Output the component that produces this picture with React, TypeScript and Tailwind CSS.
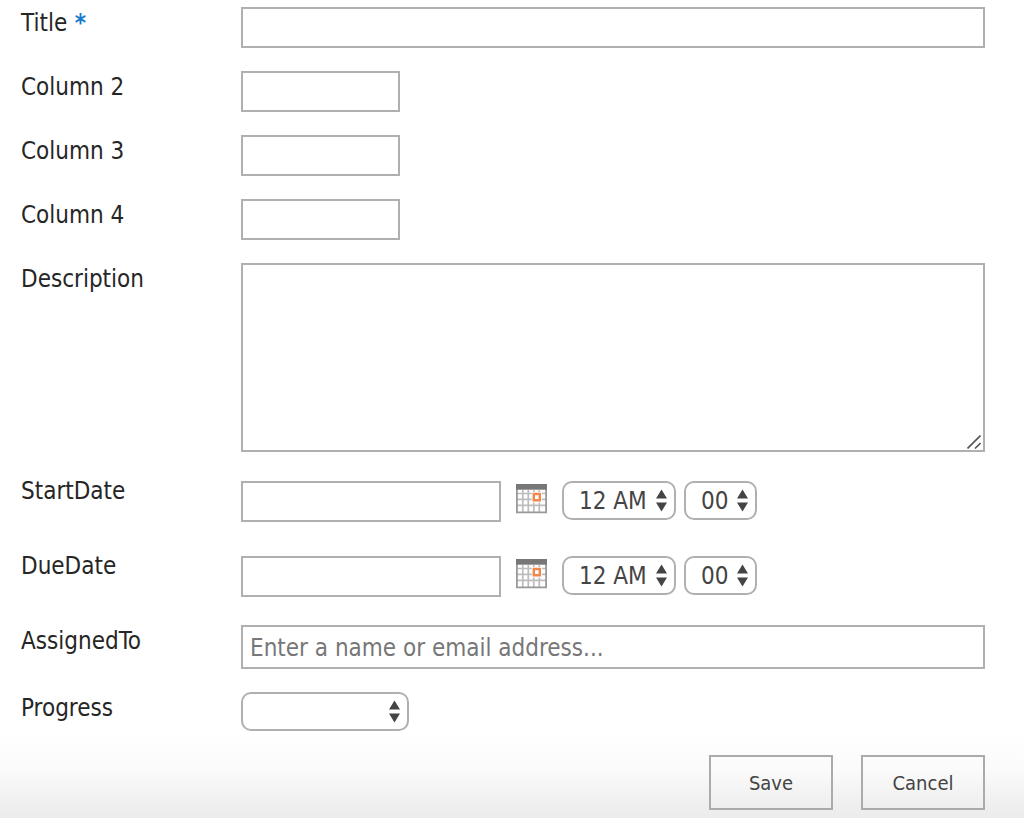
import type { ReactNode } from 'react';

const field = 'block border-2 border-[#b0b0b0] bg-white text-2xl text-[#444] outline-none focus:border-[#0072c6]';
const label = 'text-2xl leading-8 text-[#262626]';
const action = 'h-[55px] w-[124px] border-2 border-[#ababab] bg-transparent text-xl text-[#444]';

function Row({ id, title, required, children }: { id: string; title: string; required?: boolean; children: ReactNode }) {
  return (
    <div className="flex">
      <label htmlFor={id} className={`w-[220px] shrink-0 self-start ${label}`}>
        {title}
        {required && <span className="font-bold text-[#1a7acb]"> *</span>}
      </label>
      <div className="min-w-0 flex-1">{children}</div>
    </div>
  );
}

function Picker({ id, name, options, width }: { id: string; name?: string; options: string[]; width: string }) {
  return (
    <div className={`relative ${width}`}>
      <select
        id={id}
        aria-label={name}
        className="block h-[39px] w-full appearance-none rounded-[10px] border-2 border-[#b0b0b0] bg-white pl-[15px] text-2xl leading-8 text-[#444] outline-none focus:border-[#0072c6]"
      >
        {options.map((option) => (
          <option key={option}>{option}</option>
        ))}
      </select>
      <svg className="pointer-events-none absolute top-2 right-[9px]" width="11" height="23" viewBox="0 0 11 23" fill="#444" aria-hidden="true">
        <path d="M5.5 0.5 11 9.5H0zM5.5 22.5 0 13.5h11z" />
      </svg>
    </div>
  );
}

function CalendarIcon() {
  return (
    <svg width="31" height="30" viewBox="0 0 31 30" aria-hidden="true">
      <path d="M0 0h31v29.5H0z" fill="#fff" />
      <path d="M6.800 6v22M12.300 6v22M17.800 6v22M23.300 6v22M1 9.500h29M1 15.300h29M1 21.300h29" stroke="#bdbdbd" strokeWidth="1.700" />
      <path d="M0.900 5v23.400h29.200V5" fill="none" stroke="#999" strokeWidth="1.800" />
      <path d="M0 0h31v5.700H0z" fill="#777" />
      <path d="M15.800 8h10v10.500h-10z" fill="#fff" />
      <path d="M17.800 10h6v6.200h-6z" fill="#fff" stroke="#f0884c" strokeWidth="2.400" />
    </svg>
  );
}

const hours = ['12 AM', ...Array.from({ length: 11 }, (_, i) => `${i + 1} AM`), '12 PM', ...Array.from({ length: 11 }, (_, i) => `${i + 1} PM`)];
const minutes = Array.from({ length: 12 }, (_, i) => String(i * 5).padStart(2, '0'));

function DateRow({ id, title }: { id: string; title: string }) {
  return (
    <Row id={id} title={title}>
      <div className="flex items-start pt-[6px] pb-[5px]">
        <input id={id} type="text" className={`${field} h-[41px] w-[260px] px-2`} />
        <button type="button" aria-label={`${title} calendar`} className="mx-[15px] mt-[3px]">
          <CalendarIcon />
        </button>
        <div className="flex gap-2">
          <Picker id={`${id}-hours`} name={`${title} hours`} options={hours} width="w-[114px]" />
          <Picker id={`${id}-minutes`} name={`${title} minutes`} options={minutes} width="w-[73px]" />
        </div>
      </div>
    </Row>
  );
}

export default function App() {
  return (
    <form
      className="flex min-h-screen flex-col bg-white font-['DejaVu_Sans_Condensed','DejaVu_Sans',sans-serif]"
      onSubmit={(event) => event.preventDefault()}
    >
      <div className="flex flex-col gap-[23px] pt-[7px] pr-[39px] pl-[21px]">
        <Row id="title" title="Title" required>
          <input id="title" type="text" required className={`${field} h-[41px] w-full px-2`} />
        </Row>
        {['Column 2', 'Column 3', 'Column 4'].map((name) => (
          <Row key={name} id={name.replace(' ', '-')} title={name}>
            <input id={name.replace(' ', '-')} type="text" className={`${field} h-[41px] w-[159px] px-2`} />
          </Row>
        ))}
        <Row id="description" title="Description">
          <div className="relative">
            <textarea id="description" className={`${field} h-[189px] w-full resize-none px-2`} />
            <svg className="pointer-events-none absolute right-1 bottom-[3px]" width="14" height="14" viewBox="0 0 14 14" stroke="#555" strokeWidth="1.600" aria-hidden="true">
              <path d="M0.500 13.500 13.500 0.500M8 13.500 13.500 8" />
            </svg>
          </div>
        </Row>
        <DateRow id="start-date" title="StartDate" />
        <DateRow id="due-date" title="DueDate" />
        <Row id="assigned-to" title="AssignedTo">
          <input
            id="assigned-to"
            type="text"
            placeholder="Enter a name or email address..."
            className={`${field} h-11 w-full px-[7px] pt-[2px] placeholder:text-[#777]`}
          />
        </Row>
        <Row id="progress" title="Progress">
          <Picker id="progress" options={['', 'Not Started', 'In Progress', 'Completed']} width="w-[168px]" />
        </Row>
      </div>
      <div className="mt-1 flex flex-1 items-start justify-end gap-7 bg-linear-to-b from-white via-[#fbfbfb] via-40% to-[#ebebeb] pt-5 pr-[39px] pb-2">
        <button type="submit" className={action}>
          Save
        </button>
        <button type="button" className={action}>
          Cancel
        </button>
      </div>
    </form>
  );
}
